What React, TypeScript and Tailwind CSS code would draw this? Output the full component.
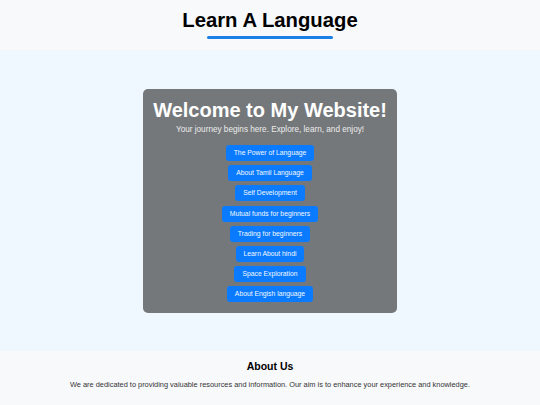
import React from 'react';

const topics = [
  'The Power of Language',
  'About Tamil Language',
  'Self Development',
  'Mutual funds for beginners',
  'Trading for beginners',
  'Learn About hindi',
  'Space Exploration',
  'About Engish language',
];

export default function App() {
  return (
    <div className="min-h-[405px] flex flex-col bg-[#f8f9fb] text-black" style={{ fontFamily: '"Liberation Sans", Arial, sans-serif' }}>
      {/* Encabezado */}
      <header className="h-[50px] flex flex-col items-center pt-[8px]">
        <h1 className="text-[20.3px] leading-[24px] font-bold">Learn A Language</h1>
        <div className="mt-[4px] w-[126px] h-[3px] bg-[#1a80e5] rounded-full" />
      </header>

      {/* Contenido principal */}
      <main className="h-[301px] bg-[#f0f8ff] flex justify-center pt-[39px]">
        <div className="w-[254px] h-[224px] bg-[#75787b] rounded-[5px] flex flex-col items-center pt-[8px]">
          <h2 className="text-[20px] leading-[26px] font-bold text-white">Welcome to My Website!</h2>
          <p className="text-[8.2px] leading-[12px] text-[#ececec] mt-[1px]">
            Your journey begins here. Explore, learn, and enjoy!
          </p>
          <div className="flex flex-col items-center gap-[4.2px] mt-[9px]">
            {topics.map((t) => (
              <button
                key={t}
                className="h-[16px] px-[8px] rounded-[3px] bg-[#0a7bff] text-[#f4f8ff] text-[6.8px] leading-[16px]"
              >
                {t}
              </button>
            ))}
          </div>
        </div>
      </main>

      {/* Pie */}
      <footer className="flex-1 flex flex-col items-center pt-[8px]">
        <h3 className="text-[10.5px] leading-[14px] font-bold">About Us</h3>
        <p className="text-[7.4px] leading-[10px] text-[#333] mt-[7px]">
          We are dedicated to providing valuable resources and information. Our aim is to enhance your experience and knowledge.
        </p>
      </footer>
    </div>
  );
}
